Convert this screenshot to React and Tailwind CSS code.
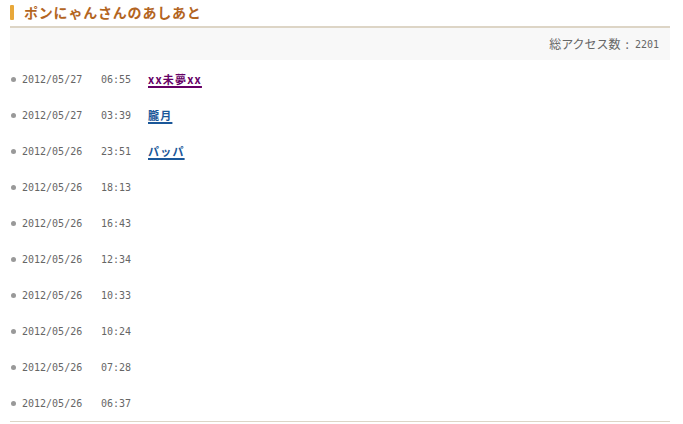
import React from "react";

const rows = [
  ["2012/05/27", "06:55", "xx未夢xx", "text-[#660066]"],
  ["2012/05/27", "03:39", "朧月", "text-[#1a5799]"],
  ["2012/05/26", "23:51", "パッパ", "text-[#1a5799]"],
  ["2012/05/26", "18:13"],
  ["2012/05/26", "16:43"],
  ["2012/05/26", "12:34"],
  ["2012/05/26", "10:33"],
  ["2012/05/26", "10:24"],
  ["2012/05/26", "07:28"],
  ["2012/05/26", "06:37"],
];

const mono = { fontFamily: '"DejaVu Sans Mono", monospace' };

export default function App() {
  return (
    <div className="w-[683px] h-[424px] bg-white overflow-hidden" style={{ fontFamily: '"Noto Sans CJK JP", sans-serif' }}>
      <div className="pl-[10px] w-[670px]">
        <div className="flex items-center h-[23px] pt-[1px]">
          <div className="w-[4px] h-[15px] bg-[#e8a83a] rounded-[1px]"></div>
          <div className="ml-[10px] text-[14px] font-bold text-[#b3651f] tracking-[0.8px] leading-none">ポンにゃんさんのあしあと</div>
        </div>
        <div className="h-[2px] bg-[#ddd5c6] mt-[3px]"></div>
        <div className="h-[32px] bg-[#f8f8f8] flex items-center justify-end pr-[11px] text-[12px] text-[#666]">
          <span>総アクセス数</span>
          <span className="ml-[5px] mr-[6px]">:</span>
          <span className="text-[10px]" style={mono}>2201</span>
        </div>
        <div className="pt-[1px]">
          {rows.map((r, i) => (
            <div key={i} className="h-[36px] flex items-center">
              <div className="w-[5px] h-[5px] rounded-full bg-[#999] ml-[1px]"></div>
              <div className="ml-[6px] w-[79px] text-[10px] text-[#666]" style={mono}>{r[0]}</div>
              <div className="w-[47px] text-[10px] text-[#666]" style={mono}>{r[1]}</div>
              {r[2] && (
                <a className={`text-[11px] font-bold underline decoration-2 underline-offset-2 tracking-[1.2px] ${r[3]}`}>{r[2]}</a>
              )}
            </div>
          ))}
        </div>
      </div>
      <div className="ml-[10px] w-[660px] h-[1px] bg-[#ddd5c6]"></div>
    </div>
  );
}
